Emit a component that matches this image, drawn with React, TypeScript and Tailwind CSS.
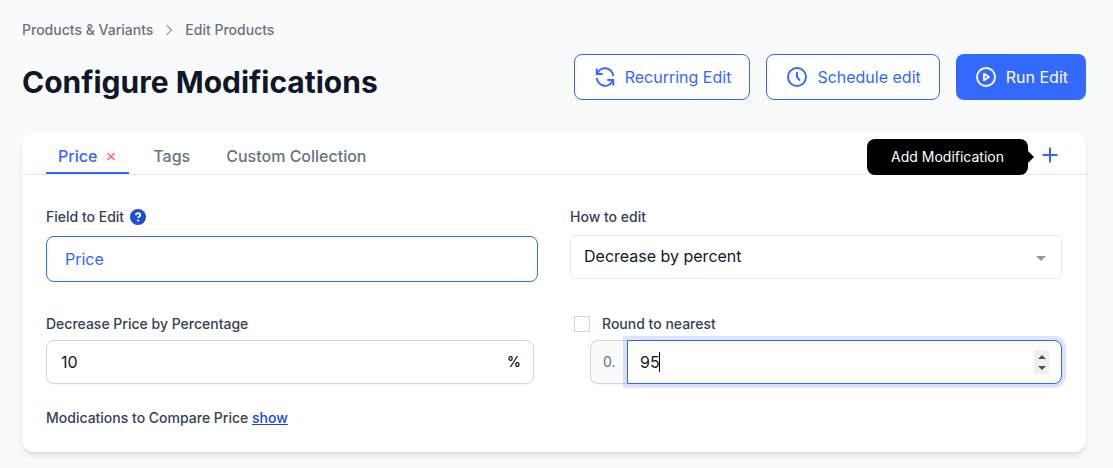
import { useState, type ReactNode } from "react";

const tabs = ["Price", "Tags", "Custom Collection"];

type ButtonProps = {
  icon: ReactNode;
  label: string;
  primary?: boolean;
};

const ActionButton = ({ icon, label, primary }: ButtonProps) => {
  return (
    <button
      type="button"
      className={`flex h-[46px] items-center gap-2.5 rounded-lg pr-[18px] pl-5 text-base leading-6 ${
        primary ? "bg-[#3369ff] text-white" : "border border-[#3366ff] bg-white text-[#3366ff]"
      }`}
    >
      <svg
        viewBox="0 0 20 20"
        className="h-5 w-5"
        fill="none"
        stroke="currentColor"
        strokeWidth="1.9"
        strokeLinejoin="round"
        aria-hidden="true"
      >
        {icon}
      </svg>
      {label}
    </button>
  );
};

const App = () => {
  const [active, setActive] = useState(0);
  const [percent, setPercent] = useState("10");
  const [nearest, setNearest] = useState("95");
  const [round, setRound] = useState(false);

  const step = (amount: number) => {
    setNearest((prev) => String(Number(prev) + amount));
  };

  return (
    <div className="min-h-screen bg-[#f9fafc] pt-5 pr-[27px] pb-4 pl-[22px] font-['Inter',sans-serif] text-gray-900">
      {/* BREADCRUMB */}
      <nav aria-label="Breadcrumb" className="flex items-center gap-2 text-sm leading-5 font-medium text-gray-500">
        <a href="#products">Products &amp; Variants</a>
        <svg viewBox="0 0 16 16" className="h-4 w-4 text-gray-400" fill="none" stroke="currentColor" strokeWidth="1.3" aria-hidden="true">
          <path d="M5.500 3l5 5-5 5" />
        </svg>
        <a href="#edit">Edit Products</a>
      </nav>

      {/* HEADER */}
      <header className="mt-3.5 flex items-center justify-between">
        <h1 className="pt-2.5 text-3xl font-bold">Configure Modifications</h1>
        <div className="flex gap-4">
          <ActionButton
            label="Recurring Edit"
            icon={
              <>
                <path d="M1.700 1.500v5.500h6" />
                <path d="M2 7A8.300 8.300 0 0 1 18.200 9" />
                <path d="M18.300 18.500v-5.500h-6" />
                <path d="M18 13A8.300 8.300 0 0 1 1.800 11" />
              </>
            }
          />
          <ActionButton
            label="Schedule edit"
            icon={
              <>
                <circle cx="10" cy="10" r="9" />
                <path d="M10 5v5l3 3.700" />
              </>
            }
          />
          <ActionButton
            primary
            label="Run Edit"
            icon={
              <>
                <circle cx="10" cy="10" r="9" />
                <path d="M8 6.800v6.400l5-3.200z" />
              </>
            }
          />
        </div>
      </header>

      <main className="mt-8 rounded-xl bg-white shadow-md">
        {/* TABS */}
        <div className="flex h-[43px] items-stretch justify-between border-b border-gray-200 px-6">
          <div className="flex gap-3">
            {tabs.map((tab, index) => (
              <div
                key={tab}
                className={`flex items-center border-b-2 px-3 pt-2 ${
                  active === index ? "border-[#3366ff] text-[#3366ff]" : "border-transparent text-gray-500"
                }`}
              >
                <button type="button" className="font-medium" onClick={() => setActive(index)}>
                  {tab}
                </button>
                {active === index && (
                  <button type="button" aria-label={"Remove " + tab} className="ml-2 text-rose-400">
                    <svg viewBox="0 0 12 12" className="h-3 w-3" fill="none" stroke="currentColor" strokeWidth="1.5">
                      <path d="M2.500 3l7 7M9.500 3l-7 7" />
                    </svg>
                  </button>
                )}
              </div>
            ))}
          </div>
          <div className="relative flex items-center pt-1">
            <button type="button" aria-label="Add Modification" className="text-[#3366ff]">
              <svg viewBox="0 0 24 24" className="h-6 w-6" fill="none" stroke="currentColor" strokeWidth="2">
                <path d="M12 4.500v15M4.500 12h15" />
              </svg>
            </button>
            <div
              role="tooltip"
              className="absolute top-[7px] right-[34px] rounded-lg bg-black px-6 py-2 text-sm leading-5 whitespace-nowrap text-white"
            >
              Add Modification
              <span className="absolute top-3 -right-1.5 border-y-6 border-l-6 border-y-transparent border-l-black" />
            </div>
          </div>
        </div>

        {/* FORM */}
        <form className="grid grid-cols-2 gap-x-8 px-6 pt-8 pb-6">
          <div>
            <label htmlFor="field" className="flex items-center gap-1.5 text-sm leading-5 font-medium text-gray-700">
              Field to Edit
              <svg viewBox="0 0 16 16" className="h-4 w-4" aria-hidden="true">
                <circle cx="8" cy="8" r="8" fill="#1d4ed8" />
                <path d="M5.900 6.200C6 4.800 6.900 4.100 8.100 4.100c1.200 0 2.100.7 2.100 1.800 0 1.600-2.100 1.600-2.100 3.200" fill="none" stroke="#fff" strokeWidth="1.900" />
                <circle cx="8.100" cy="11.500" r="1.100" fill="#fff" />
              </svg>
            </label>
            <input
              id="field"
              readOnly
              value="Price"
              className="mt-[9px] h-[46px] w-full rounded-lg border border-[#3366ff] px-[18px] text-base text-[#3366ff] outline-none"
            />
          </div>

          <div>
            <label htmlFor="how" className="block text-sm leading-5 font-medium text-gray-700">
              How to edit
            </label>
            <div className="relative mt-2">
              <select id="how" className="h-11 w-full appearance-none rounded-md border border-gray-200 bg-white px-[13px] pb-0.5 text-base outline-none">
                <option>Decrease by percent</option>
              </select>
              <span className="pointer-events-none absolute top-[21px] right-4 border-x-5 border-t-5 border-x-transparent border-t-[#999]" />
            </div>
          </div>

          <div className="mt-8 pr-1">
            <label htmlFor="percent" className="block text-sm leading-5 font-medium text-gray-700">
              Decrease Price by Percentage
            </label>
            <div className="mt-1.5 flex h-11 items-center rounded-lg border border-gray-300 pr-3 pl-3.5 shadow-xs">
              <input
                id="percent"
                value={percent}
                onChange={(e) => setPercent(e.target.value)}
                className="min-w-0 flex-1 text-base outline-none"
              />
              <span className="text-sm font-medium text-black">%</span>
            </div>
          </div>

          <div className="mt-8">
            <div className="flex items-center gap-3 pl-1">
              <input
                id="round"
                type="checkbox"
                checked={round}
                onChange={(e) => setRound(e.target.checked)}
                className="h-4 w-4 appearance-none border border-gray-300 bg-white checked:bg-[#3366ff]"
              />
              <label htmlFor="round" className="text-sm leading-5 font-medium text-gray-700">
                Round to nearest
              </label>
            </div>
            <div className="mt-1.5 ml-5 flex h-11 rounded-lg shadow-xs">
              <span className="flex w-[37px] items-center rounded-l-lg border border-r-0 border-gray-300 bg-gray-50 pl-3 text-sm text-gray-500">
                0.
              </span>
              <div className="relative flex flex-1 items-center rounded-r-lg border border-[#3366ff] bg-white px-3 ring-4 ring-[#3366ff]/17">
                <input
                  type="number"
                  aria-label="Nearest value"
                  value={nearest}
                  onChange={(e) => setNearest(e.target.value)}
                  className="min-w-0 flex-1 appearance-none text-base caret-transparent outline-none [&::-webkit-inner-spin-button]:appearance-none"
                />
                {/* caret */}
                <span className="absolute top-[11px] left-[31px] h-5 w-px bg-black" />
                {/* STEPPER */}
                <div className="flex h-6 w-[15px] flex-col bg-[#f0f0f0]">
                  <button type="button" aria-label="Increase" className="flex flex-1 items-end justify-center pb-[3px]" onClick={() => step(1)}>
                    <span className="border-x-4 border-b-4 border-x-transparent border-b-[#505050]" />
                  </button>
                  <button type="button" aria-label="Decrease" className="flex flex-1 items-start justify-center pt-1" onClick={() => step(-1)}>
                    <span className="border-x-4 border-t-4 border-x-transparent border-t-[#505050]" />
                  </button>
                </div>
              </div>
            </div>
          </div>

          <p className="mt-6 text-sm leading-5 font-medium text-gray-700">
            Modications to Compare Price{" "}
            <a href="#compare" className="text-blue-700 underline">
              show
            </a>
          </p>
        </form>
      </main>
    </div>
  );
};

export default App;
